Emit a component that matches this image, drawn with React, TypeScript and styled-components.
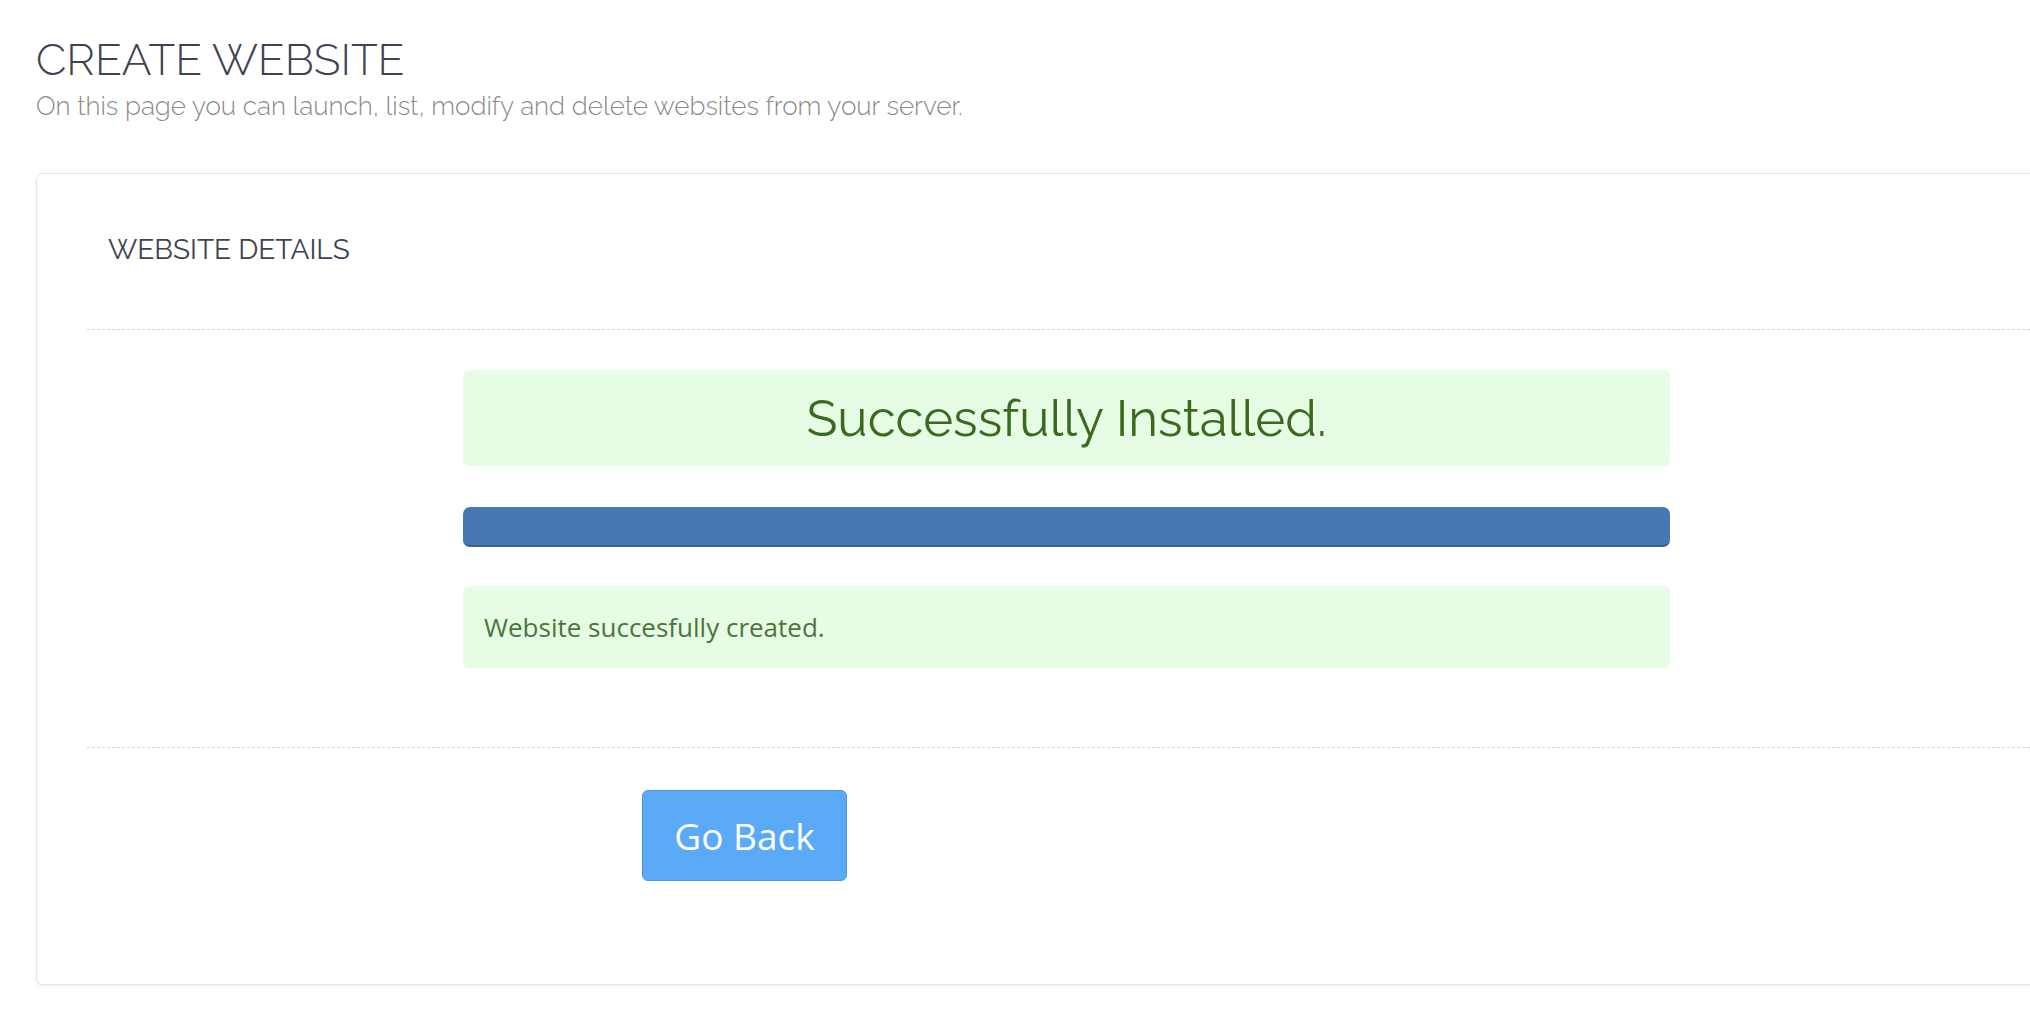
import React from 'react';
import styled, { createGlobalStyle } from 'styled-components';

const GlobalStyle = createGlobalStyle`
  html, body {
    margin: 0;
    padding: 0;
    background: #ffffff;
    overflow: hidden;
  }
  body {
    font-family: "Open Sans", "Noto Sans", sans-serif;
  }
`;

const Page = styled.div`
  width: 2030px;
  height: 1036px;
  padding: 0 0 0 36px;
  box-sizing: border-box;
  overflow: hidden;
`;

const PageHeader = styled.header`
  padding-top: 35px;
  height: 173px;
  box-sizing: border-box;

  h2 {
    margin: 0;
    font-family: "Raleway", "Lato", sans-serif;
    font-weight: 300;
    font-size: 44px;
    line-height: 50px;
    color: #3d4451;
  }

  p {
    margin: 6px 0 0;
    font-family: "Raleway", "Lato", sans-serif;
    font-weight: 300;
    font-size: 26px;
    line-height: 30px;
    color: #8a8a8a;
  }
`;

const Panel = styled.section`
  width: 2100px;
  height: 812px;
  box-sizing: border-box;
  border: 1px solid #e2e5ea;
  border-radius: 7px;
  box-shadow: 0 2px 3px rgba(0, 0, 0, 0.06);
  background: #ffffff;
  padding: 0 0 0 50px;
`;

const PanelTitle = styled.h3`
  margin: 0;
  padding: 60px 0 0 21px;
  height: 155px;
  box-sizing: border-box;
  font-family: "Raleway", "Lato", sans-serif;
  font-weight: 400;
  font-size: 28px;
  line-height: 32px;
  color: #3d4451;
`;

const Divider = styled.hr`
  margin: 0;
  border: 0;
  border-top: 1px dashed #d4d4d4;
`;

const Content = styled.div`
  width: 1207px;
  margin-left: 376px;
  padding: 40px 0 79px;
  display: flex;
  flex-direction: column;
  gap: 41px;
`;

const Alert = styled.div<{ $big?: boolean }>`
  background: #e6fce4;
  border-radius: 6px;
  box-sizing: border-box;
  height: ${p => (p.$big ? '96px' : '82px')};
  margin-top: ${p => (p.$big ? '0' : '-2px')};
  display: flex;
  align-items: center;
  justify-content: ${p => (p.$big ? 'center' : 'flex-start')};
  padding: 0 21px;
  color: ${p => (p.$big ? '#3a6a1f' : '#4a7638')};
  font-family: ${p => (p.$big ? '"Raleway", "Lato", sans-serif' : '"Open Sans", sans-serif')};
  font-weight: 400;
  font-size: ${p => (p.$big ? '51px' : '26px')};
`;

const ProgressBar = styled.div`
  height: 40px;
  box-sizing: border-box;
  background: #4679b3;
  border-bottom: 2px solid #3b6190;
  border-radius: 7px;
`;

const Actions = styled.div`
  padding: 42px 0 0 555px;
`;

const Button = styled.button`
  width: 205px;
  height: 91px;
  box-sizing: border-box;
  background: #5aaaf7;
  border: 1px solid #4c96df;
  border-radius: 6px;
  color: #ffffff;
  font-family: "Open Sans", sans-serif;
  font-size: 37px;
  padding: 0;
  cursor: pointer;
`;

const App: React.FC = () => {
  return (
    <>
      <GlobalStyle />
      <Page>
        <PageHeader>
          <h2>CREATE WEBSITE</h2>
          <p>On this page you can launch, list, modify and delete websites from your server.</p>
        </PageHeader>
        <Panel>
          <PanelTitle>WEBSITE DETAILS</PanelTitle>
          <Divider />
          <Content>
            <Alert $big>Successfully Installed.</Alert>
            <ProgressBar />
            <Alert>Website succesfully created.</Alert>
          </Content>
          <Divider />
          <Actions>
            <Button>Go Back</Button>
          </Actions>
        </Panel>
      </Page>
    </>
  );
};

export default App;
